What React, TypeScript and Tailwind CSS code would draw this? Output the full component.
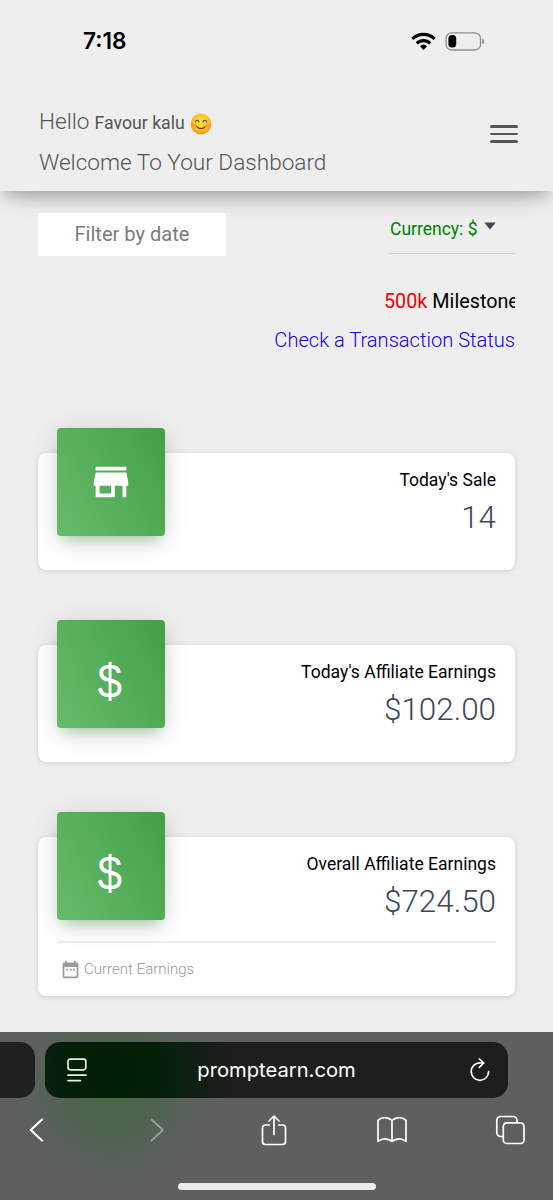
import type { ReactNode } from "react";
import { MdDateRange, MdStore } from "react-icons/md";

interface StatCardProps {
    title: string;
    value: string;
    icon: ReactNode;
    footer?: string;
}

function StatCard({ title, value, icon, footer }: StatCardProps) {
    return (
        <div className="rounded-lg bg-white px-[19px] shadow-[0_1px_5px_rgba(0,0,0,0.14)]">
            <div className="flex h-[117px] items-start justify-between">
                <div className="-mt-[25px] flex h-[108px] w-[108px] items-center justify-center rounded-[4px] bg-[linear-gradient(60deg,#66bb6a,#43a047)] text-white shadow-[0_5px_26px_rgba(0,0,0,0.14),0_9px_13px_-6px_rgba(76,175,80,0.4)]">
                    {icon}
                </div>
                <div className="pt-[14px] text-right">
                    <p className="text-[17.55px] leading-[26px] text-black">{title}</p>
                    <h3 className="mt-[4px] text-[31.4px] leading-[42px] font-light text-[#3c4858]">
                        {value}
                    </h3>
                </div>
            </div>
            {footer && (
                <div className="-mt-[13px] flex h-[55px] items-center gap-[3px] border-t-2 border-[#eeeeee] pl-[3px] font-light text-[#999999]">
                    <MdDateRange size={21} />
                    <span className="text-[15.05px]">{footer}</span>
                </div>
            )}
        </div>
    );
}

function Dollar() {
    return (
        <span className="scale-x-90 pt-[14px] pr-[2px] font-['Liberation_Sans',sans-serif] text-[49px] leading-none">
            $
        </span>
    );
}

function StatusBar() {
    return (
        <div className="flex h-[82px] items-center justify-between pr-[68px] pl-[83px]">
            <span className="font-['Inter',sans-serif] text-[22.6px] font-semibold text-black">7:18</span>
            <div className="flex items-center gap-[9px]">
                <svg width="25" height="19" viewBox="0 0 25 19" fill="none" stroke="#000" strokeWidth="3.2">
                    <path d="M1.4 6.8a16 16 0 0 1 22.2 0" />
                    <path d="M5.8 11.3a9.7 9.7 0 0 1 13.4 0" />
                    <path d="M9 14.2a5.2 5.2 0 0 1 7 0L12.5 18z" fill="#000" stroke="none" />
                </svg>
                <svg width="40" height="19" viewBox="0 0 40 19">
                    <rect x="1.1" y="0.8" width="34.4" height="17.2" rx="5.6" fill="none" stroke="#8d8d8d" strokeWidth="1.3" />
                    <rect x="3.4" y="3" width="7.8" height="12.6" rx="3.6" fill="#000" />
                    <path d="M37.2 6.5c2.6.8 2.6 5 0 5.8z" fill="#8d8d8d" />
                </svg>
            </div>
        </div>
    );
}

function SmileEmoji() {
    return (
        <svg width="22" height="22" viewBox="0 0 22 22" fill="none" strokeLinecap="round">
            <defs>
                <radialGradient id="face" cx="50%" cy="42%" r="56%">
                    <stop offset="0" stopColor="#ffe64a" />
                    <stop offset="0.65" stopColor="#fcc52c" />
                    <stop offset="1" stopColor="#ef9318" />
                </radialGradient>
            </defs>
            <circle cx="11" cy="11" r="10.4" fill="url(#face)" />
            <ellipse cx="4.2" cy="12.2" rx="2.7" ry="2" fill="#f6862b" opacity="0.55" />
            <ellipse cx="17.8" cy="12.2" rx="2.7" ry="2" fill="#f6862b" opacity="0.55" />
            <path d="M5.4 9c.5-2.3 3-2.3 3.5 0M13.1 9c.5-2.3 3-2.3 3.5 0" stroke="#68400c" strokeWidth="1.1" />
            <path d="M6.8 13.6c2 2.7 6.4 2.7 8.4 0" stroke="#68400c" strokeWidth="1.1" />
        </svg>
    );
}

function Header() {
    return (
        <header className="h-[191px] bg-[#eeeeee] shadow-[0_13px_26px_-12px_rgba(0,0,0,0.2),0_4px_24px_rgba(0,0,0,0.1),0_8px_14px_-5px_rgba(0,0,0,0.17)]">
            <StatusBar />
            <div className="flex justify-between pr-[35px] pl-[39px] text-[#555555]">
                <div className="pt-[20px] text-[22.6px] leading-[40px] font-light">
                    <div className="flex items-baseline">
                        <span>Hello</span>
                        <span className="ml-[5px] text-[17.7px] font-normal">Favour kalu</span>
                        <span className="ml-[5px] flex self-center pt-[2px]">
                            <SmileEmoji />
                        </span>
                    </div>
                    <div>Welcome To Your Dashboard</div>
                </div>
                <button className="flex flex-col gap-[5px] self-start pt-[43px]" aria-label="Toggle menu">
                    <span className="h-[2.5px] w-[28px] rounded-sm bg-[#555555]" />
                    <span className="h-[2.5px] w-[28px] rounded-sm bg-[#555555]" />
                    <span className="h-[2.5px] w-[28px] rounded-sm bg-[#555555]" />
                </button>
            </div>
        </header>
    );
}

function BrowserBar() {
    return (
        <footer className="h-[168px] overflow-hidden bg-[#5f5f60] bg-[radial-gradient(ellipse_125px_115px_at_112px_60px,#446645_0%,rgba(70,101,71,0.8)_30%,rgba(82,98,83,0.4)_62%,rgba(95,95,96,0)_100%)] font-['Inter',sans-serif] text-white">
            <div className="flex gap-[10px] pt-[10px]">
                <div className="h-[56px] w-[35px] rounded-r-[15px] bg-[#1e211e]" />
                <div className="flex h-[56px] w-[463px] items-center justify-between rounded-[15px] bg-[#1e1e1e] bg-[radial-gradient(ellipse_125px_110px_at_66px_30px,#031e06_0%,#05200a_45%,rgba(30,30,30,0)_100%)] pr-[18px] pl-[22px]">
                    <svg width="20" height="24" viewBox="0 0 20 24" fill="none" stroke="#e4f5e2" strokeWidth="1.7" strokeLinecap="round">
                        <rect x="1" y="1.2" width="17.8" height="10.6" rx="2.2" />
                        <path d="M1 17.2h18M1 22.6h12.4" />
                    </svg>
                    <span className="mr-[4px] text-[20.2px]">promptearn.com</span>
                    <svg width="20" height="24" viewBox="0 0 20 24" fill="none" stroke="#fff" strokeWidth="1.7" strokeLinecap="round" strokeLinejoin="round">
                        <path d="M18.6 13.6a8.7 8.7 0 1 1-8.7-8.7h3.7" />
                        <path d="M9.3 1l4.3 4-4.3 4.4" />
                    </svg>
                </div>
            </div>
            <div className="flex h-[63px] items-center pl-[29px]">
                <svg width="15" height="24" viewBox="0 0 15 24" fill="none" stroke="#fff" strokeWidth="2.2" strokeLinecap="round" strokeLinejoin="round">
                    <path d="M13 1.5L1.8 12 13 22.5" />
                </svg>
                <svg className="ml-[106px]" width="15" height="24" viewBox="0 0 15 24" fill="none" stroke="#94a093" strokeWidth="1.8" strokeLinecap="round" strokeLinejoin="round">
                    <path d="M1.5 1.5L13 12 1.5 22.5" />
                </svg>
                <svg className="ml-[96px]" width="26" height="32" viewBox="0 0 26 32" fill="none" stroke="#fff" strokeWidth="1.7" strokeLinecap="round" strokeLinejoin="round">
                    <path d="M8.3 11H4.5a3 3 0 0 0-3 3v13.5a3 3 0 0 0 3 3h17a3 3 0 0 0 3-3V14a3 3 0 0 0-3-3h-3.8" />
                    <path d="M13 20.5V2M8 7l5-5 5 5" />
                </svg>
                <svg className="ml-[89px]" width="32" height="28" viewBox="0 0 32 28" fill="none" stroke="#fff" strokeWidth="1.7" strokeLinejoin="round">
                    <path d="M16 4.5C12 .8 6 .8 2 4.3v21C6 22 12 22 16 25.5" />
                    <path d="M16 4.5C20 .8 26 .8 30 4.3v21C26 22 20 22 16 25.5z" />
                </svg>
                <svg className="ml-[87px]" width="30" height="30" viewBox="0 0 30 30" fill="none" stroke="#fff" strokeWidth="1.7" strokeLinejoin="round">
                    <rect x="8.3" y="7.8" width="20.7" height="20.7" rx="3.6" />
                    <path d="M8.3 21.5H5.8a4 4 0 0 1-4-4V5.5a4 4 0 0 1 4-4H18a4 4 0 0 1 4 4v2.3" />
                </svg>
            </div>
            <div className="mx-auto mt-[22px] h-[7px] w-[198px] rounded-full bg-[#ececec]" />
        </footer>
    );
}

export default function App() {
    return (
        <div className="flex h-[1200px] w-[553px] flex-col overflow-hidden bg-[#eeeeee] font-['Roboto',sans-serif]">
            <Header />
            <main className="flex-1 px-[38px] pt-[22px]">
                <div className="flex items-start justify-between">
                    <div className="flex h-[43px] w-[188px] items-center justify-center bg-white text-[20.1px] text-[#7b7b7b]">
                        Filter by date
                    </div>
                    <div className="flex h-[41px] w-[126px] gap-[6px] border-b border-[#d2d2d2] pt-[3px] pl-[1px] text-[17.5px] leading-[27px] text-[#008000]">
                        <span>Currency: $</span>
                        <svg className="mt-[6px]" width="12" height="8" viewBox="0 0 12 8">
                            <path d="M0.3 0.5h11.4L6 7.5z" fill="#3c4858" />
                        </svg>
                    </div>
                </div>
                <div className="mt-[31px] ml-auto w-[131px] overflow-hidden text-[19.8px] leading-[30px] whitespace-nowrap text-black">
                    <span className="text-[#f00000]">500k</span> Milestone
                </div>
                <div className="mt-[8px] text-right text-[20.1px] leading-[30px] font-light text-[#1900d5]">
                    Check a Transaction Status
                </div>
                <div className="mt-[98px] flex flex-col gap-[75px]">
                    <StatCard title="Today's Sale" value="14" icon={<MdStore size={46} />} />
                    <StatCard title="Today's Affiliate Earnings" value="$102.00" icon={<Dollar />} />
                    <StatCard
                        title="Overall Affiliate Earnings"
                        value="$724.50"
                        icon={<Dollar />}
                        footer="Current Earnings"
                    />
                </div>
            </main>
            <BrowserBar />
        </div>
    );
}
